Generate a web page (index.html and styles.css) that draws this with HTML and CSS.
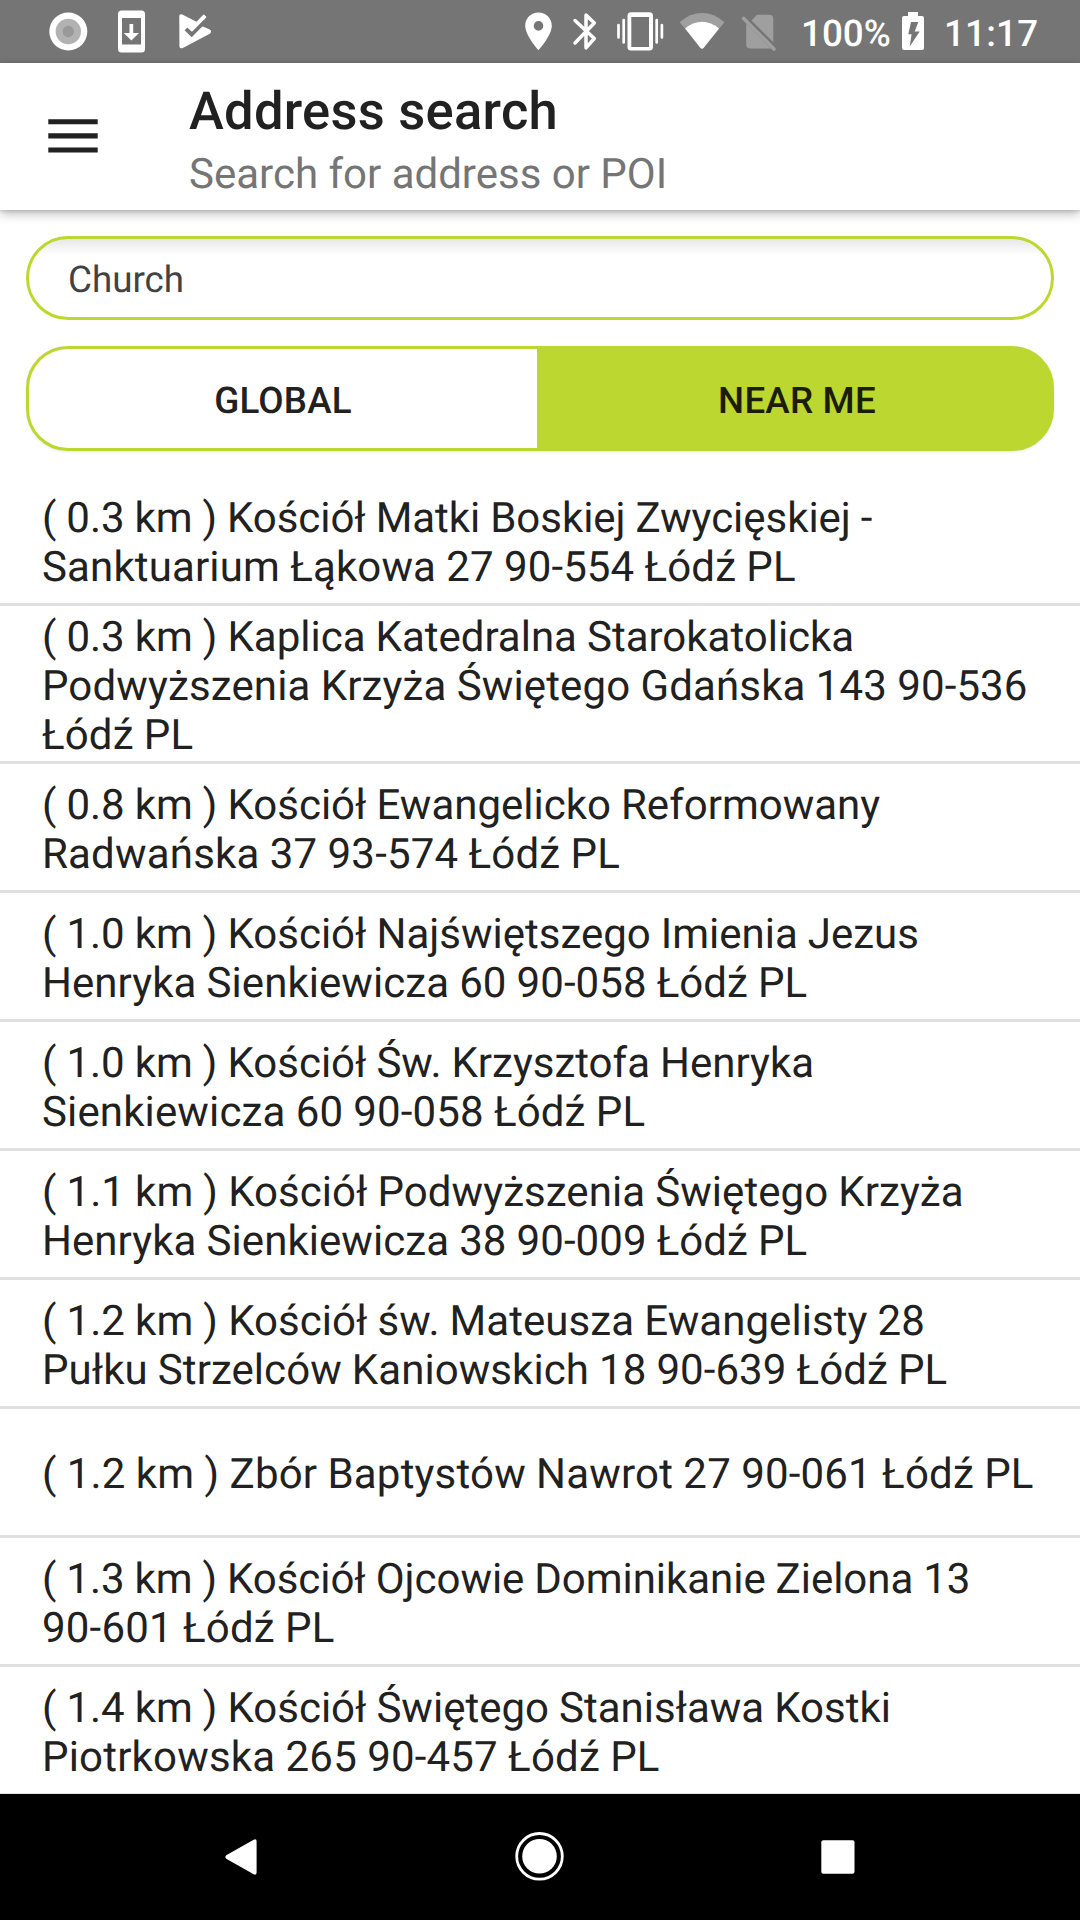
FILE: index.html
```html
<!DOCTYPE html>
<html lang="en">
<head>
<meta charset="utf-8">
<title>Address search</title>
<link rel="stylesheet" href="styles.css">
</head>
<body>
<div class="screen">
  <div class="status-bar">
    <svg class="status-icons" width="240" height="63" viewBox="0 0 240 63" fill="#fff">
      <circle cx="68.3" cy="31.5" r="19"/>
      <circle cx="68.3" cy="31.5" r="12.7" fill="#b2b2b2"/>
      <circle cx="68.3" cy="31.5" r="5.7" fill="#999"/>
      <path fill-rule="evenodd" d="M121.500 10.500h20a3.500 3.500 0 0 1 3.500 3.500v35a3.500 3.500 0 0 1-3.500 3.500h-20a3.500 3.500 0 0 1-3.500-3.500V14a3.500 3.500 0 0 1 3.500-3.500zM122 18v26.500h19V18z"/>
      <path d="M129.500 24h3.700v9h5.800l-7.600 7.600-7.600-7.600h5.700z"/>
      <path d="M179.300 16.500q0-3.300 3-1.900L196.500 21.700 203.500 14.500 206 17 200.500 25.500 209.800 29.500q2.600 2.200 0 4.200l-27 14.200q-3.400 1.400-3.400-2z"/>
      <path d="M186 28.800l5.700 5.700 13.500-13.800" fill="none" stroke="#757575" stroke-width="4"/>
      <path d="M188 25.500l4.300 4 11.700-15 2.500 2.500-14.200 14.500-5-4.800z"/>
    </svg>
    <svg class="status-icons" width="280" height="63" viewBox="500 0 280 63" fill="#fff">
      <path fill-rule="evenodd" d="M538.500 12.500c-7.400 0-13.300 5.700-13.300 13.300 0 9.800 13.300 24.500 13.300 24.500s13.300-14.700 13.300-24.500c0-7.600-5.900-13.300-13.300-13.300zm0 8.600a4.800 4.800 0 1 1 0 9.600 4.800 4.800 0 0 1 0-9.600z"/>
      <path d="M575 20.500l19.300 18-8.300 9.300V15l8.300 8-19.300 20" fill="none" stroke="#fff" stroke-width="3.500" stroke-linecap="round" stroke-linejoin="round"/>
      <path fill-rule="evenodd" d="M631 12.300h18.500a3.500 3.500 0 0 1 3.500 3.500V47a3.500 3.500 0 0 1-3.500 3.500H631a3.500 3.500 0 0 1-3.500-3.500V15.800a3.500 3.500 0 0 1 3.500-3.500zM631.300 17v30H649V17z"/>
      <path d="M618.500 25v12.500M623.700 20v22.500M656.700 20v22.500M661.900 25v12.500" stroke="#fff" stroke-width="2.700" stroke-linecap="round"/>
      <path d="M679.700 22.200Q690 13 702 13t22.500 9.200L703.700 47.700q-1.700 2-3.400 0z" fill="#9f9f9f"/>
      <path d="M685.200 28.500Q693 21.800 702 21.800t17 6.700l-15.300 19.200q-1.700 2-3.400 0z"/>
      <path d="M757 14.700h12.300a4 4 0 0 1 4 4v23.600L751.500 20.500zM746.200 23.500 771 48.500H750a4 4 0 0 1-3.800-4z" fill="#9f9f9f"/>
      <path d="M743.700 18.500 774 49" stroke="#9f9f9f" stroke-width="3.600" stroke-linecap="round"/>
    </svg>
    <span class="battery-level">100%</span>
    <svg class="battery" width="22" height="38" viewBox="0 0 22 38">
      <path fill="#fff" fill-rule="evenodd" d="M6 0h10v4h4a2 2 0 0 1 2 2v30a2 2 0 0 1-2 2H2a2 2 0 0 1-2-2V6a2 2 0 0 1 2-2h4zM9 10 6.300 22.300h3.300L7.700 34.500l10-15h-5L16.300 10z"/>
    </svg>
    <span class="clock">11:17</span>
  </div>
  <header class="app-bar">
    <svg class="menu" width="50" height="36" viewBox="0 0 50 36" fill="#212121">
      <path d="M.3 1.200h49.400v5.100H.3zM.3 15.300h49.400v5.100H.3zM.3 29.400h49.400v5.100H.3z"/>
    </svg>
    <div class="titles">
      <h1 class="title">Address search</h1>
      <p class="subtitle">Search for address or POI</p>
    </div>
  </header>
  <main class="content">
    <div class="search">Church</div>
    <div class="scope">
      <div class="scope-option">GLOBAL</div>
      <div class="scope-option selected">NEAR ME</div>
    </div>
    <ul class="results">
      <li class="result"><span class="line tight">( 0.3 km ) Kościół Matki Boskiej Zwycięskiej -</span><span class="line loose">Sanktuarium Łąkowa 27 90-554 Łódź PL</span></li>
      <li class="result"><span class="line">( 0.3 km ) Kaplica Katedralna Starokatolicka</span><span class="line loose">Podwyższenia Krzyża Świętego Gdańska 143 90-536</span><span class="line loose">Łódź PL</span></li>
      <li class="result"><span class="line">( 0.8 km ) Kościół Ewangelicko Reformowany</span><span class="line wide">Radwańska 37 93-574 Łódź PL</span></li>
      <li class="result"><span class="line">( 1.0 km ) Kościół Najświętszego Imienia Jezus</span><span class="line snug">Henryka Sienkiewicza 60 90-058 Łódź PL</span></li>
      <li class="result"><span class="line">( 1.0 km ) Kościół Św. Krzysztofa Henryka</span><span class="line loose">Sienkiewicza 60 90-058 Łódź PL</span></li>
      <li class="result"><span class="line snug">( 1.1 km ) Kościół Podwyższenia Świętego Krzyża</span><span class="line snug">Henryka Sienkiewicza 38 90-009 Łódź PL</span></li>
      <li class="result"><span class="line snug">( 1.2 km ) Kościół św. Mateusza Ewangelisty 28</span><span class="line snug">Pułku Strzelców Kaniowskich 18 90-639 Łódź PL</span></li>
      <li class="result single"><span class="line wide">( 1.2 km ) Zbór Baptystów Nawrot 27 90-061 Łódź PL</span></li>
      <li class="result"><span class="line tight">( 1.3 km ) Kościół Ojcowie Dominikanie Zielona 13</span><span class="line wide">90-601 Łódź PL</span></li>
      <li class="result"><span class="line">( 1.4 km ) Kościół Świętego Stanisława Kostki</span><span class="line wide">Piotrkowska 265 90-457 Łódź PL</span></li>
    </ul>
  </main>
  <nav class="nav-bar">
    <svg width="1080" height="126" viewBox="0 0 1080 126" fill="#fff">
      <path d="M226.200 61.300 253.700 45.700q2.900-1.200 2.900 1.800v31q0 3-2.900 1.800L226.200 64.800q-1.700-1.700 0-3.500z"/>
      <circle cx="539.500" cy="62.300" r="22.800" fill="none" stroke="#fff" stroke-width="2.800"/>
      <circle cx="539.500" cy="62.300" r="17.300"/>
      <rect x="821.300" y="46.300" width="33.200" height="33.400" rx="2"/>
    </svg>
  </nav>
</div>
</body>
</html>
```
FILE: styles.css
```css
body {
  margin: 0;
  background: #fff;
  color: #212121;
  font-family: Roboto, sans-serif;
  text-rendering: geometricPrecision;
}

.screen {
  display: flex;
  flex-direction: column;
  width: 1080px;
  height: 1920px;
  overflow: hidden;
}

.status-bar {
  display: flex;
  flex: none;
  align-items: center;
  height: 63px;
  background: #757575;
  color: #fff;
  font-size: 36.75px;
  font-weight: 500;
  line-height: 44px;
  white-space: nowrap;
}

.status-icons + .status-icons {
  margin-left: 260px;
}

.battery-level {
  width: 101px;
  margin-left: 21px;
  padding-top: 4px;
}

.battery {
  margin-bottom: 1px;
}

.clock {
  margin-left: 20px;
  padding-top: 4px;
  letter-spacing: 0.2px;
}

.app-bar {
  position: relative;
  z-index: 1;
  display: flex;
  flex: none;
  align-items: center;
  height: 147px;
  padding-left: 48px;
  background: #fff;
  box-shadow: 0 4px 10px rgba(0, 0, 0, 0.25), 0 1px 4px rgba(0, 0, 0, 0.15);
}

.menu {
  margin-bottom: 2px;
}

.titles {
  margin-left: 91px;
  padding-top: 15px;
}

.title {
  margin: 0;
  font-size: 52.5px;
  font-weight: 500;
  letter-spacing: 0.26px;
  line-height: 62px;
}

.subtitle {
  margin: 0;
  color: #757575;
  font-size: 42px;
  line-height: 66px;
}

.content {
  flex: 1;
  min-height: 0;
  overflow: hidden;
  padding-top: 26px;
}

.search {
  box-sizing: border-box;
  height: 84px;
  margin: 0 26px;
  padding-left: 39px;
  border: 3px solid #bcd830;
  border-radius: 42px;
  background: linear-gradient(#e7e7e7, #fff 16px);
  color: #424242;
  font-size: 36.75px;
  line-height: 81px;
}

.scope {
  display: flex;
  box-sizing: border-box;
  height: 105px;
  margin: 26px 26px 0;
  border: 3px solid #bcd830;
  border-radius: 42px;
  background: #bcd830;
  box-shadow: 0 1px 3px rgba(0, 0, 0, 0.1);
  font-size: 36.75px;
  font-weight: 500;
  line-height: 104px;
  text-align: center;
}

.scope-option {
  width: 508px;
  height: 99px;
  border-radius: 39px 0 0 39px;
  background: #fff;
  letter-spacing: 0.2px;
}

.scope-option.selected {
  box-sizing: border-box;
  width: 514px;
  padding-left: 6px;
  background: none;
  color: #1b1d08;
}

.results {
  margin: 26px 0 0;
  padding: 0;
  list-style: none;
}

.result {
  display: flex;
  flex-direction: column;
  justify-content: center;
  box-sizing: border-box;
  min-height: 129px;
  padding: 7px 0 1px 42px;
  border-bottom: 3px solid #e0e0e0;
  font-size: 42px;
  line-height: 49px;
  white-space: nowrap;
  word-spacing: -0.4px;
}

.result.single {
  padding-top: 6px;
  padding-bottom: 2px;
}

.line.tight {
  letter-spacing: -0.04px;
}

.line.snug {
  letter-spacing: 0.06px;
}

.line.loose {
  letter-spacing: 0.14px;
}

.line.wide {
  letter-spacing: 0.19px;
}

.nav-bar {
  flex: none;
  height: 126px;
  background: #000;
}
```
